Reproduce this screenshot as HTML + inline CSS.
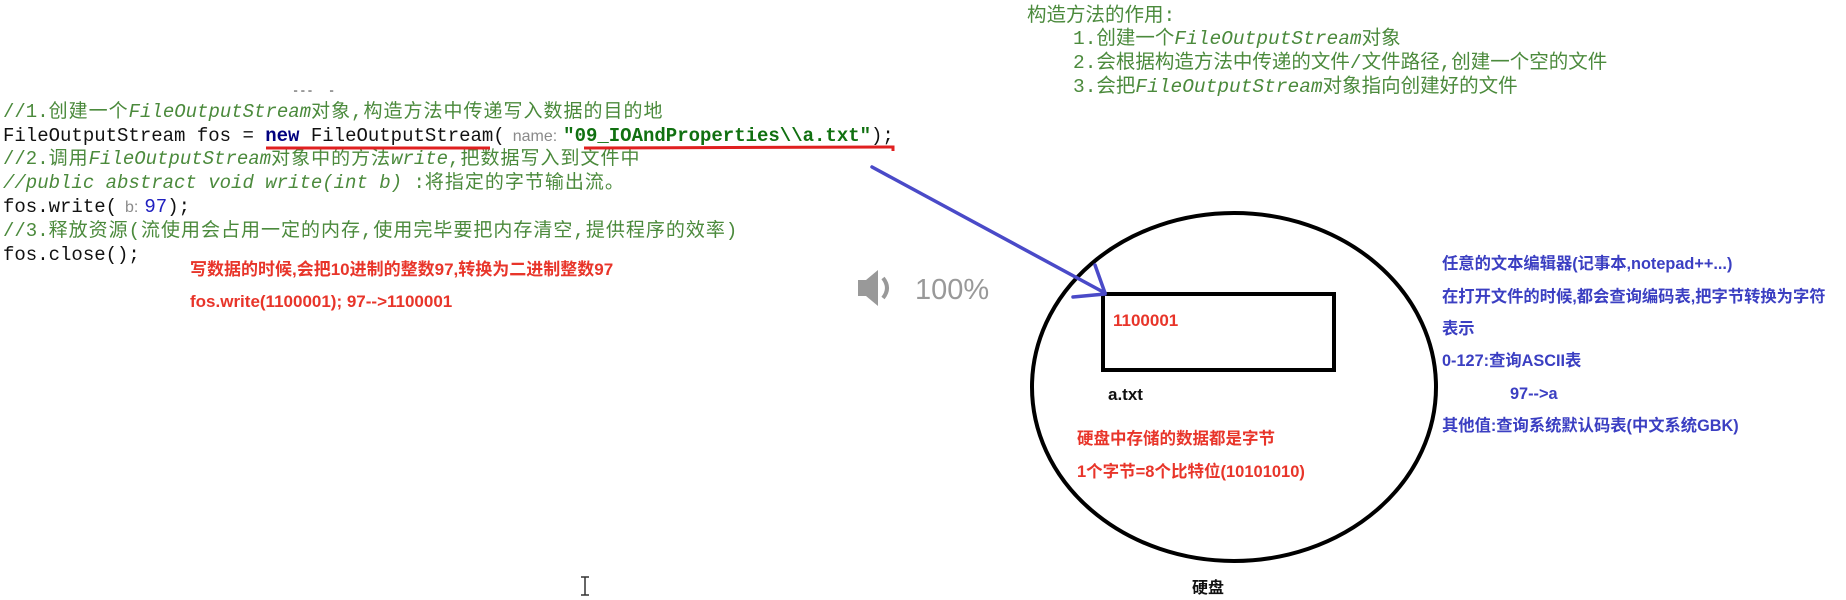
<!DOCTYPE html>
<html><head><meta charset="utf-8"><style>
body{margin:0;width:1846px;height:600px;background:#fff;position:relative;overflow:hidden;font-family:"Liberation Sans","Noto Sans CJK SC",sans-serif}
.a{position:absolute;white-space:pre;line-height:1}
.code{font-family:"Liberation Mono","Noto Sans CJK SC",monospace;font-size:19px;color:#111}
.cm{color:#4b8a3c}
.cm i{font-style:italic}
.cj{letter-spacing:1px}
.kw{color:#00007f;font-weight:bold}
.str{color:#107010;font-weight:bold}
.hint{color:#8a8a8a;font-family:"Liberation Sans",sans-serif;font-size:16px;margin:0 6px 0 8px}
.red{color:#e8352a;font-weight:bold;font-size:17px;font-family:"Liberation Sans","Noto Sans CJK SC",sans-serif}
.blue{color:#3b3fc2;font-weight:bold;font-size:16.3px}
.grn{font-family:"Liberation Mono","Noto Sans CJK SC",monospace;font-size:19.5px;color:#4b8a3c}
</style></head><body>

<div class="a grn" style="left:1027px;top:7px">构造方法的作用:</div>
<div class="a grn" style="left:1073px;top:30px">1.创建一个<i>FileOutputStream</i>对象</div>
<div class="a grn" style="left:1073px;top:54px">2.会根据构造方法中传递的文件/文件路径,创建一个空的文件</div>
<div class="a grn" style="left:1073px;top:78px">3.会把<i>FileOutputStream</i>对象指向创建好的文件</div>

<div class="a code" style="left:292px;top:85px;color:#333;font-size:12px">---  -</div>
<div class="a code cm" style="left:3px;top:103px">//1.<span class="cj">创建一个</span><i>FileOutputStream</i><span class="cj">对象,构造方法中传递写入数据的目的地</span></div>
<div class="a code" style="left:3px;top:127px">FileOutputStream fos = <span class="kw">new</span> FileOutputStream(<span class="hint">name:</span><span class="str">"09_IOAndProperties\\a.txt"</span>);</div>
<div class="a code cm" style="left:3px;top:150px">//2.<span class="cj">调用</span><i>FileOutputStream</i><span class="cj">对象中的方法</span><i>write</i><span class="cj">,把数据写入到文件中</span></div>
<div class="a code cm" style="left:3px;top:174px"><i>//public abstract void write(int b)</i> :<span class="cj">将指定的字节输出流。</span></div>
<div class="a code" style="left:3px;top:198px">fos.write(<span class="hint">b:</span><span style="color:#2020c0">97</span>);</div>
<div class="a code cm" style="left:3px;top:222px">//3.<span class="cj">释放资源(流使用会占用一定的内存,使用完毕要把内存清空,提供程序的效率)</span></div>
<div class="a code" style="left:3px;top:246px">fos.close();</div>

<div class="a red" style="left:190px;top:261px">写数据的时候,会把10进制的整数97,转换为二进制整数97</div>
<div class="a red" style="left:190px;top:293px">fos.write(1100001); 97--&gt;1100001</div>

<svg class="a" style="left:0;top:0" width="1846" height="600">
<line x1="266" y1="148" x2="490" y2="148" stroke="#e02020" stroke-width="3"/>
<path d="M584 148 L893 147 L893 151" stroke="#e02020" stroke-width="3" fill="none"/>
<ellipse cx="1234" cy="387" rx="202" ry="174" fill="none" stroke="#000" stroke-width="4"/>
<rect x="1103" y="294" width="231" height="76" fill="none" stroke="#000" stroke-width="4"/>
<g stroke="#4a4ac8" stroke-width="3.5" fill="none" stroke-linecap="round">
<line x1="872" y1="167" x2="1105" y2="293"/>
<line x1="1095" y1="265" x2="1105" y2="293"/>
<line x1="1073" y1="297" x2="1105" y2="294"/>
</g>
<path d="M858 280 h8 l12 -10 v36 l-12 -10 h-8 z" fill="#999"/>
<path d="M883 278 q8 10 0 20" stroke="#999" stroke-width="4" fill="none"/>
<text x="915" y="299" font-family="Liberation Sans" font-size="29" fill="#999">100%</text>
<path d="M581 577 h8 M585 577 v18 M581 595 h8" stroke="#333" stroke-width="1.5"/>
</svg>

<div class="a" style="left:1113px;top:312px;color:#e8352a;font-weight:bold;font-size:17px">1100001</div>
<div class="a" style="left:1108px;top:386px;color:#111;font-weight:bold;font-size:17px">a.txt</div>
<div class="a red" style="left:1077px;top:431px;font-size:16.5px">硬盘中存储的数据都是字节</div>
<div class="a red" style="left:1077px;top:464px;font-size:16.5px">1个字节=8个比特位(10101010)</div>
<div class="a" style="left:1192px;top:578px;color:#111;font-weight:bold;font-size:16px;font-family:'Noto Sans CJK SC',sans-serif">硬盘</div>

<div class="a blue" style="left:1442px;top:256px">任意的文本编辑器(记事本,notepad++...)</div>
<div class="a blue" style="left:1442px;top:289px">在打开文件的时候,都会查询编码表,把字节转换为字符</div>
<div class="a blue" style="left:1442px;top:321px">表示</div>
<div class="a blue" style="left:1442px;top:353px">0-127:查询ASCII表</div>
<div class="a blue" style="left:1510px;top:386px">97--&gt;a</div>
<div class="a blue" style="left:1442px;top:418px">其他值:查询系统默认码表(中文系统GBK)</div>
</body></html>
